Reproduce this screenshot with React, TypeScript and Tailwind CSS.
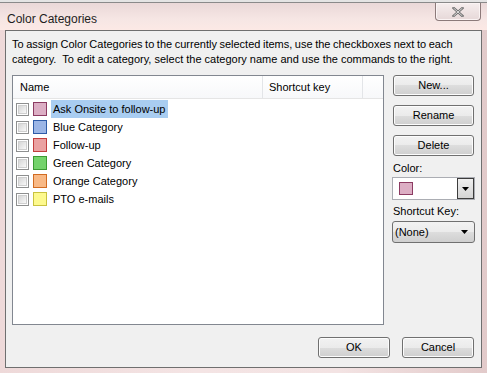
import React from "react";

const rows = [
  { name: "Ask Onsite to follow-up", fill: "#dcaec4", border: "#8c3b62", selected: true },
  { name: "Blue Category", fill: "#9cb6e6", border: "#2f5ca8" },
  { name: "Follow-up", fill: "#eaa1a1", border: "#c23d3d" },
  { name: "Green Category", fill: "#74d36b", border: "#3c9a32" },
  { name: "Orange Category", fill: "#f8b986", border: "#d26c22" },
  { name: "PTO e-mails", fill: "#fdf98e", border: "#c9c23f" },
];

function WinButton({ label, className = "" }: { label: string; className?: string }) {
  return (
    <div
      className={`flex h-[21px] items-center justify-center rounded-[3px] border border-[#707070] bg-[linear-gradient(#f2f2f2_0%,#ebebeb_50%,#dddddd_50%,#cfcfcf_100%)] text-[11px] text-black shadow-[inset_0_0_0_1px_#fcfcfc] ${className}`}
    >
      {label}
    </div>
  );
}

function Checkbox() {
  return (
    <div className="flex h-[13px] w-[13px] items-center justify-center border border-[#8e8f8f] bg-white">
      <div className="h-[9px] w-[9px] border border-[#cfcfcf] bg-[linear-gradient(135deg,#d6d6d6,#f8f8f8)]" />
    </div>
  );
}

function Swatch({ fill, border }: { fill: string; border: string }) {
  return <div className="h-[14px] w-[14px] border" style={{ background: fill, borderColor: border }} />;
}

function Arrow() {
  return (
    <svg width="7" height="4" viewBox="0 0 7 4">
      <path d="M0 0h7L3.5 4z" fill="#000" />
    </svg>
  );
}

export default function App() {
  return (
    <div
      className="relative h-[373px] w-[487px] overflow-hidden bg-[linear-gradient(90deg,#eed9d9,#f4e4e4_40%,#f3e3e3_70%,#e2caca)] text-black"
      style={{ fontFamily: '"Liberation Sans", Arial, sans-serif' }}
    >
      <div className="h-[3px] border-b border-[#8a8a8a] bg-[#e4e4e4]" />
      {/* title bar */}
      <div className="flex h-[27px] items-start bg-[linear-gradient(#ead8d8,#f6e6e4_60%,#fce9e5)]">
        <div className="pl-[7px] pt-[7px] text-[12px] text-[#1e1e1e]">Color Categories</div>
        <div className="ml-auto mr-[6px] flex h-[18px] w-[46px] items-center justify-center rounded-b-[4px] border border-t-0 border-[#8c7a7a] bg-[linear-gradient(#f6eeee,#e6d8d8)] shadow-[inset_0_0_0_1px_#fbf4f4]">
          <svg width="12" height="10" viewBox="0 0 12 10">
            <path d="M1.5 1l9 8M10.5 1l-9 8" stroke="#6e6e6e" strokeWidth="2.4" strokeLinecap="square" />
            <path d="M1.5 1l9 8M10.5 1l-9 8" stroke="#f4f4f4" strokeWidth="0.8" />
          </svg>
        </div>
      </div>

      {/* client area */}
      <div className="ml-[5px] flex h-[338px] w-[477px] flex-col border border-[#6f6f6f] bg-[#f0f0f0] px-[6px] pt-[6px] text-[11px] leading-[15px]">
        <p className="whitespace-nowrap">
          <span className="[word-spacing:-0.5px]">
            To assign Color Categories to the currently selected items, use the checkboxes next to each
          </span>
          <br />
          <span>category.&nbsp; To edit a category, select the category name and use the commands to the right.</span>
        </p>

        <div className="mt-[8px] flex">
          {/* list */}
          <div className="h-[250px] w-[372px] border border-[#828790] bg-white">
            <div className="flex h-[23px] items-center border-b border-[#e5e5e5] bg-[linear-gradient(#ffffff,#f7f8fa)]">
              <div className="w-[250px] border-r border-[#e3e5e8] pl-[7px] leading-[22px]">Name</div>
              <div className="w-[100px] border-r border-[#e3e5e8] pl-[6px] leading-[22px]">Shortcut key</div>
            </div>
            <div className="pt-[1px]">
              {rows.map((r) => (
                <div key={r.name} className="flex h-[18px] items-center">
                  <div className="ml-[3px]">
                    <Checkbox />
                  </div>
                  <div className="ml-[4px]">
                    <Swatch fill={r.fill} border={r.border} />
                  </div>
                  <div
                    className={`ml-[4px] h-[18px] px-[2px] leading-[18px] ${r.selected ? "bg-[#a9cdf1]" : ""}`}
                  >
                    {r.name}
                  </div>
                </div>
              ))}
            </div>
          </div>

          {/* right column */}
          <div className="ml-[8px] flex w-[83px] flex-col">
            <WinButton label="New..." className="ml-[1px] w-[81px]" />
            <WinButton label="Rename" className="ml-[1px] mt-[9px] w-[81px]" />
            <WinButton label="Delete" className="ml-[1px] mt-[9px] w-[81px]" />
            <div className="ml-[1px] mt-[5px] leading-[15px]">Color:</div>
            <div className="mt-[1px] flex h-[23px] items-center border border-[#abadb3] bg-white">
              <div className="ml-[6px]">
                <div className="h-[13px] w-[14px] border border-[#8c3b62] bg-[#dcaec4]" />
              </div>
              <div className="ml-auto flex h-[21px] w-[17px] items-center justify-center border border-[#3c3c3c] bg-[linear-gradient(#f0f0f0,#d4d4d4)]">
                <Arrow />
              </div>
            </div>
            <div className="ml-[1px] mt-[4px] leading-[15px]">Shortcut Key:</div>
            <div className="mt-[2px] flex h-[22px] items-center rounded-[3px] border border-[#707070] bg-[linear-gradient(#f2f2f2_0%,#ebebeb_50%,#dddddd_50%,#cfcfcf_100%)] pl-[2px] pr-[6px]">
              <span>(None)</span>
              <span className="ml-auto">
                <Arrow />
              </span>
            </div>
          </div>
        </div>

        <div className="mt-[12px] flex justify-end pr-[1px]">
          <WinButton label="OK" className="w-[72px]" />
          <WinButton label="Cancel" className="ml-[12px] w-[72px]" />
        </div>
      </div>
    </div>
  );
}
